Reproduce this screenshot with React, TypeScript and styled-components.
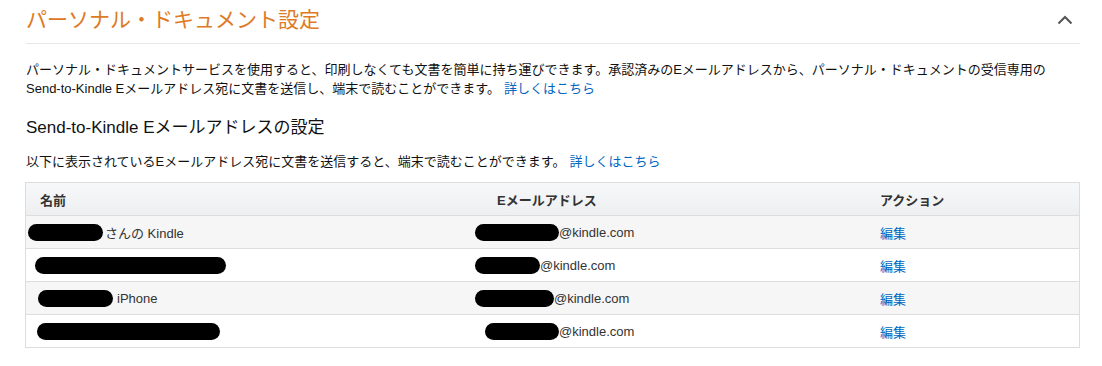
import React from "react";
import styled, { createGlobalStyle } from "styled-components";

const GlobalStyle = createGlobalStyle`
  body {
    margin: 0;
    background: #fff;
    font-family: "Liberation Sans", "Noto Sans CJK JP", Arial, sans-serif;
    color: #111;
  }
`;

const Page = styled.div`
  padding: 0 22px 0 26px;
`;

const Header = styled.div`
  display: flex;
  justify-content: space-between;
  align-items: center;
  height: 44px;
  border-bottom: 1px solid #e7e7e7;
  box-sizing: border-box;
`;

const Title = styled.h2`
  margin: 0 0 4px;
  font-size: 21px;
  line-height: 1.2;
  font-weight: 400;
  color: #de7a24;
`;

const Toggle = styled.button`
  display: flex;
  align-items: center;
  justify-content: center;
  width: 24px;
  height: 24px;
  margin: 0 3px 4px 0;
  padding: 0;
  border: 0;
  background: none;
  cursor: pointer;
`;

const Text = styled.p<{ $top: number }>`
  margin: ${({ $top }) => $top}px 0 0;
  font-size: 13px;
  line-height: 19px;
  color: #111;
`;

const Link = styled.a`
  color: #0066c0;
  text-decoration: none;
  margin-left: 4px;
`;

const SubHeading = styled.h3`
  margin: 19px 0 0;
  font-size: 17px;
  line-height: 21px;
  font-weight: 400;
  color: #111;
`;

const Table = styled.div`
  margin: 11px 0 0 -1px;
  border: 1px solid #ddd;
  display: grid;
  grid-template-columns: 457px 383px 1fr;
  font-size: 13px;
  color: #333;
`;

const HeadCell = styled.div`
  height: 32px;
  display: flex;
  align-items: center;
  padding-left: 14px;
  font-weight: 700;
  color: #333;
  background: linear-gradient(#f7f8fa, #eeeff1);
`;

const Cell = styled.div<{ $shaded: boolean }>`
  height: 32px;
  display: flex;
  align-items: center;
  padding-left: 14px;
  border-top: 1px solid #ddd;
  background: ${({ $shaded }) => ($shaded ? "#f6f6f6" : "#fff")};
  white-space: nowrap;
`;

const Redaction = styled.span<{ $offset: number; $width: number }>`
  display: inline-block;
  height: 17px;
  width: ${({ $width }) => $width}px;
  margin-left: ${({ $offset }) => $offset}px;
  border-radius: 9px;
  background: #000;
`;

const ActionLink = styled.a`
  color: #0066c0;
  text-decoration: none;
`;

type Device = {
  name: { offset: number; width: number; gap: number; text: string };
  mail: { offset: number; width: number };
};

const devices: Device[] = [
  { name: { offset: -12, width: 75, gap: 2, text: "さんの Kindle" }, mail: { offset: -22, width: 84 } },
  { name: { offset: -5, width: 191, gap: 0, text: "" }, mail: { offset: -22, width: 65 } },
  { name: { offset: -2, width: 75, gap: 4, text: "iPhone" }, mail: { offset: -22, width: 79 } },
  { name: { offset: -3, width: 183, gap: 0, text: "" }, mail: { offset: -12, width: 74 } },
];

const App: React.FC = () => {
  return (
    <Page>
      <GlobalStyle />
      <Header>
        <Title>パーソナル・ドキュメント設定</Title>
        <Toggle aria-label="閉じる">
          <svg width="16" height="10" viewBox="0 0 16 10">
            <polyline points="1.5,8.5 8,2 14.5,8.5" fill="none" stroke="#555" strokeWidth="2" />
          </svg>
        </Toggle>
      </Header>
      <Text $top={16}>
        パーソナル・ドキュメントサービスを使用すると、印刷しなくても文書を簡単に持ち運びできます。承認済みのEメールアドレスから、パーソナル・ドキュメントの受信専用の
        <br />
        Send-to-Kindle Eメールアドレス宛に文書を送信し、端末で読むことができます。
        <Link href="#">詳しくはこちら</Link>
      </Text>
      <SubHeading>Send-to-Kindle Eメールアドレスの設定</SubHeading>
      <Text $top={14}>
        以下に表示されているEメールアドレス宛に文書を送信すると、端末で読むことができます。
        <Link href="#">詳しくはこちら</Link>
      </Text>
      <Table>
        <HeadCell>名前</HeadCell>
        <HeadCell>Eメールアドレス</HeadCell>
        <HeadCell>アクション</HeadCell>
        {devices.map((d, i) => {
          const shaded = i % 2 === 0;
          return (
            <React.Fragment key={i}>
              <Cell $shaded={shaded}>
                <Redaction $offset={d.name.offset} $width={d.name.width} />
                {d.name.text && <span style={{ marginLeft: d.name.gap }}>{d.name.text}</span>}
              </Cell>
              <Cell $shaded={shaded}>
                <Redaction $offset={d.mail.offset} $width={d.mail.width} />
                <span>@kindle.com</span>
              </Cell>
              <Cell $shaded={shaded}>
                <ActionLink href="#">編集</ActionLink>
              </Cell>
            </React.Fragment>
          );
        })}
      </Table>
    </Page>
  );
};

export default App;
